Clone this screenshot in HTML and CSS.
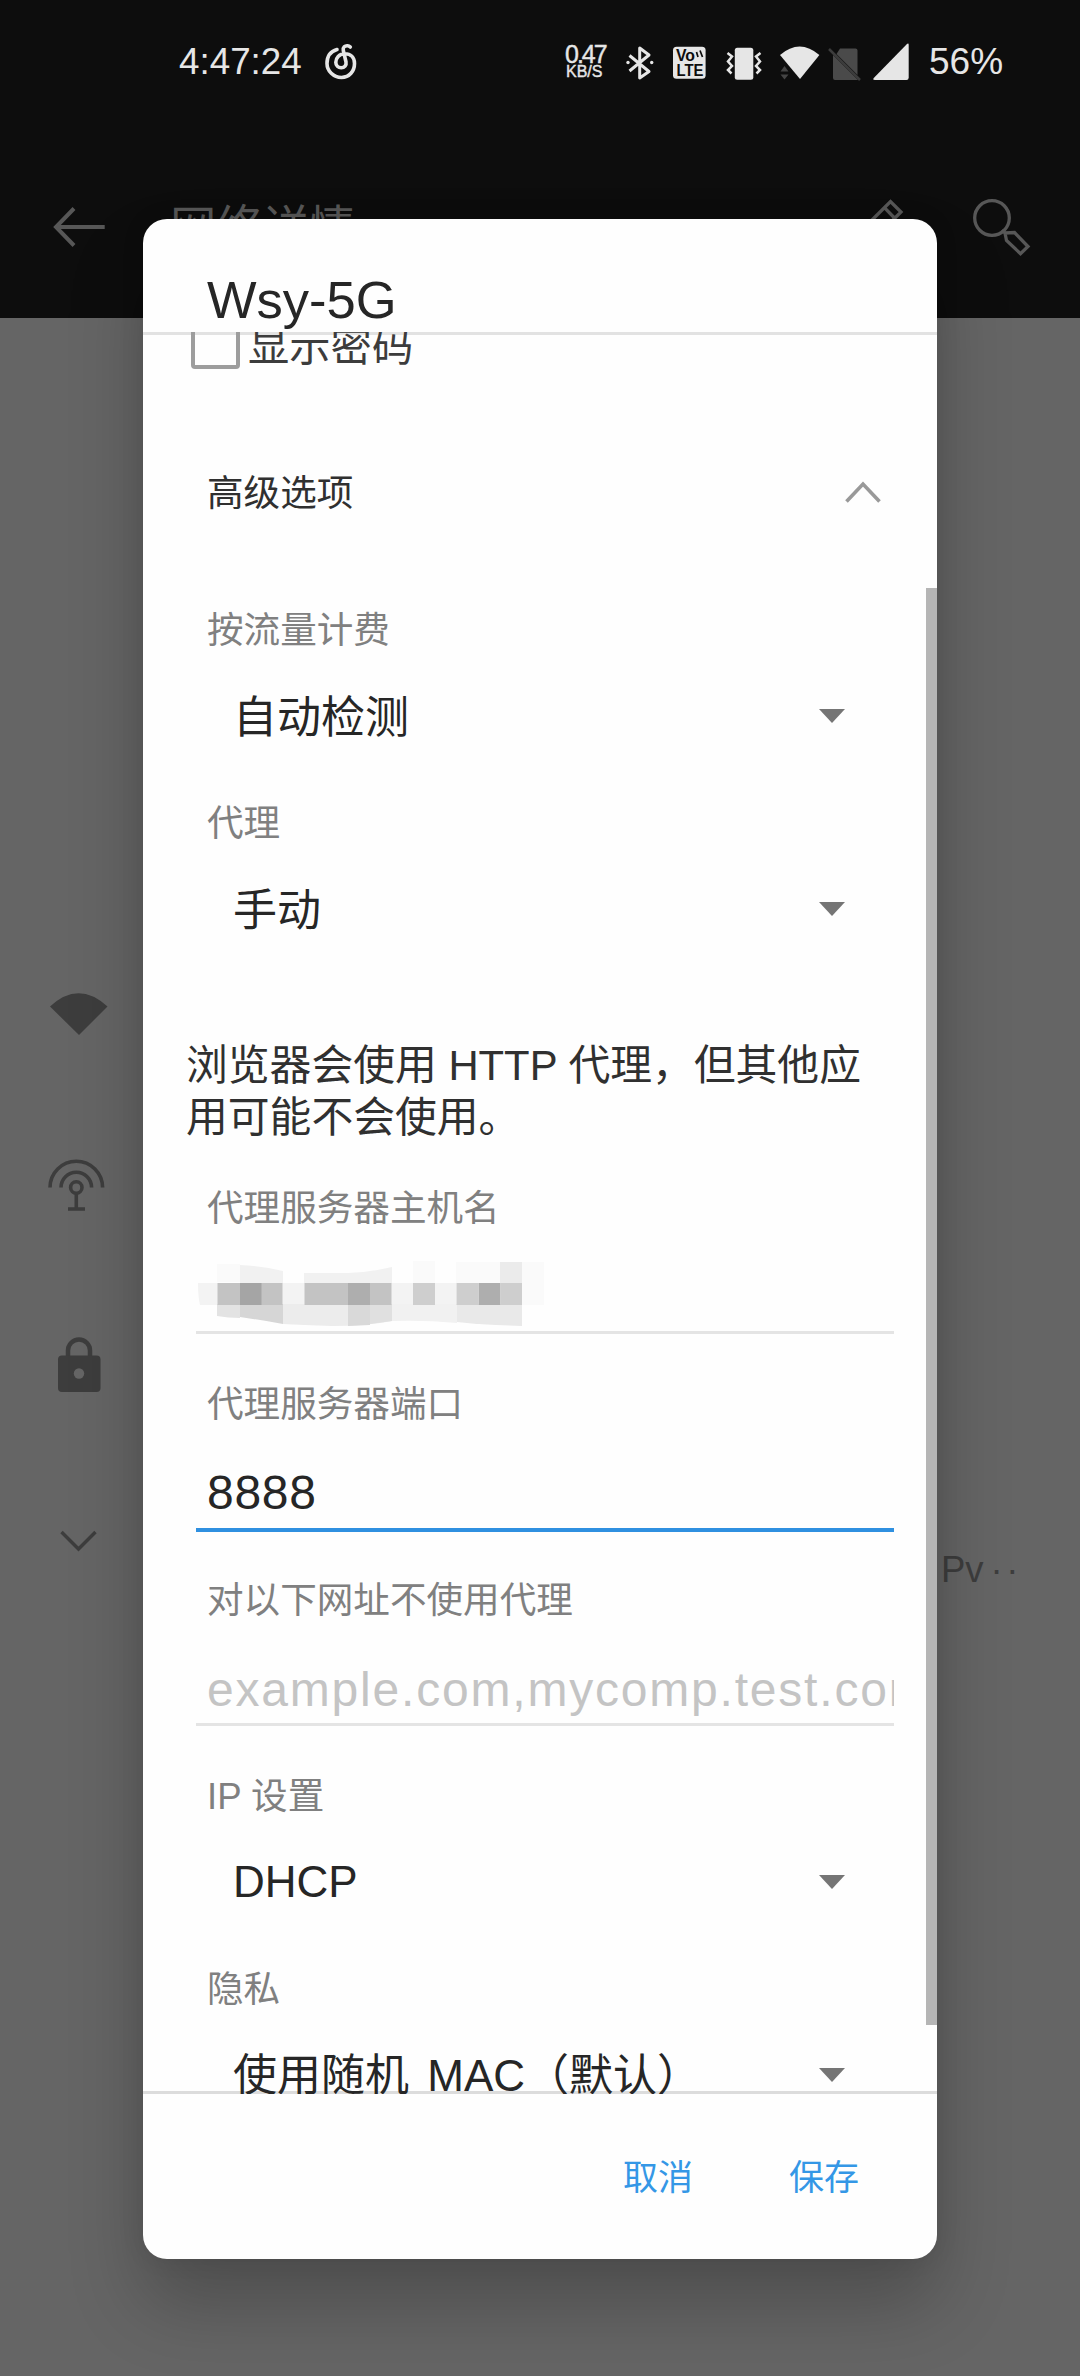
FILE: index.html
```html
<!DOCTYPE html>
<html lang="zh-CN">
<head>
<meta charset="utf-8">
<title>Wsy-5G</title>
<link rel="stylesheet" href="styles.css">
</head>
<body>
<div class="screen">
  <header class="top">
    <div class="status">
      <span class="clock">4:47:24</span>
      <svg class="music" width="36" height="40" viewBox="323 42 36 40" fill="none" stroke="#e6e6e6" stroke-width="3.600" stroke-linecap="round"><path d="M337 49.500C330 51.500 327 57 327 63.500C327 71 333.500 77.500 341.500 77.500S354.500 71 354.500 63.500C354.500 57.500 350.500 53.800 345 53.800C339 53.800 335.800 58 335.800 62.300C335.800 65.500 338.300 67.800 341.200 67.800C344.500 67.800 346.600 65 346 62L343.300 50.500C342.600 47 345 45.500 347.500 45.700C348.800 45.800 349.700 46.400 350.300 47"/></svg>
      <div class="speed"><span class="rate">0.47</span><span class="unit">KB/S</span></div>
      <svg class="sys" width="292" height="44" viewBox="622 38 292 44" fill="#e6e6e6">
        <path d="M629.500 53.500L649 69.500L639.700 76V46L649 53L629.500 69" fill="none" stroke="#e6e6e6" stroke-width="3" stroke-linejoin="round"/>
        <circle cx="628" cy="60.500" r="1.700"/><circle cx="651.700" cy="60.500" r="1.700"/>
        <rect x="673" y="44.800" width="32.600" height="32" rx="3.500"/>
        <g class="volte"><text x="676" y="59" textLength="19" lengthAdjust="spacingAndGlyphs">Vo</text><text x="676.500" y="73.800" textLength="27" lengthAdjust="spacingAndGlyphs">LTE</text></g>
        <path d="M696.500 50l1.500 5M700 48.500l2.500 6.500" stroke="#0d0d0d" stroke-width="1.700"/>
        <rect x="734.800" y="45.800" width="18.500" height="32" rx="2.500"/>
        <path d="M727.500 51l4.500 3.500l-4 5l4 4.500l-4 4l3.500 3.500M760.500 51l-4.500 3.500l4 5l-4 4.500l4 4l-3.500 3.500" fill="none" stroke="#e6e6e6" stroke-width="2.500"/>
        <path d="M780 53Q799.600 36 819.400 53L800 77Z"/>
        <path d="M780.500 69.500l4-5.500l4 5.500zM780.500 72.500l4 5l4-5z" fill="#444"/>
        <path d="M840 46.500h15.500q2 0 2 2v24.500l-21-21zM833 53l25 25h-23q-2 0-2-2z" fill="#4a4a4a"/><path d="M829 47L860 78" stroke="#3c3c3c" stroke-width="2.500"/>
        <path d="M906.500 42.500Q908.700 40.500 908.700 43V75.500Q908.700 78 906.500 78H875Q872 78 874 75.800Z"/>
      </svg>
      <span class="battery">56%</span>
    </div>
    <div class="appbar">
      <svg class="back" width="54" height="44" viewBox="53 205 54 44" fill="none" stroke="#575757" stroke-width="4"><path d="M104.700 227H56M74 208.500L56 227L74 245.500"/></svg>
      <span class="heading">网络详情</span>
      <svg class="tools" width="170" height="64" viewBox="864 194 170 64" fill="none" stroke="#575757" stroke-width="3.300"><path d="M866 225L890.500 200.500L901 211L876 236M884.400 206.700L895 217.500"/><circle cx="992" cy="217" r="17.300" stroke-width="3.300"/><path d="M1002 229L1005 232L1014.500 231.500L1028 245.500L1020.500 252.700L1006.500 239.500L1005 232"/></svg>
    </div>
  </header>
  <main class="rows">
    <svg width="60" height="46" viewBox="49 991 60 46" fill="#3d3d3d"><path d="M50 1006.500Q78.500 980 107.500 1006.500L79 1035Z"/></svg>
    <svg width="60" height="54" viewBox="46 1158 60 54" fill="none" stroke="#3d3d3d" stroke-width="3.600"><path d="M50 1187.500a26.300 26.300 0 0 1 52.600 0M61 1187.500a15.300 15.300 0 0 1 30.600 0M76.300 1194V1209M68 1209h17"/><circle cx="76.300" cy="1187.500" r="5.700"/></svg>
    <svg width="46" height="60" viewBox="56 1334 46 60"><path d="M68 1357V1350.500a11 11 0 0 1 22 0V1357" fill="none" stroke="#3d3d3d" stroke-width="4.500"/><rect x="58" y="1355.500" width="42.500" height="36.500" rx="4" fill="#3d3d3d"/><circle cx="79" cy="1373.500" r="5.200" fill="#656565"/></svg>
    <svg width="40" height="24" viewBox="58 1529 40 24" fill="none" stroke="#3d3d3d" stroke-width="3.400"><path d="M61.500 1532L78.500 1549L95.500 1532"/></svg>
    <span class="summary">Pv<span class="dots">··</span></span>
  </main>

  <section class="dialog">
    <h1 class="title">Wsy-5G</h1>
    <div class="body">
      <div class="check"><span class="box"></span><span class="cn">显示密码</span></div>
      <div class="advanced"><span class="cn">高级选项</span><svg width="40" height="24" viewBox="843 479 40 24" fill="none" stroke="#999" stroke-width="3.600"><path d="M846.500 500.500L863 483L879.500 500.500"/></svg></div>
      <div class="label first">按流量计费</div>
      <div class="spinner"><span class="cn">自动检测</span><i class="caret"></i></div>
      <div class="label">代理</div>
      <div class="spinner"><span class="cn">手动</span><i class="caret"></i></div>
      <p class="info">浏览器会使用 HTTP 代理，但其他应用可能不会使用。</p>
      <div class="label host">代理服务器主机名</div>
      <div class="field">
        <svg width="350" height="68" viewBox="196 1260 350 68">
          <path fill="#f3f3f3" d="M198 1283h340v22H200q-2-8-2-22z"/>
          <path fill="#fafafa" d="M217 1264h23v18h-23zM413 1261h22v22h-22zM456 1262h88v43h-88z"/>
          <path fill="#f1f1f1" d="M240 1265q22 1 43 6v12h-43zM304 1273h44q24-1 44-6v16h-88z"/>
          <path fill="#ebebeb" d="M500 1262h22v21h-22z"/>
          <path fill="#e3e3e3" d="M217 1304h23v14q-12 0-23-2z"/>
          <path fill="#d6d6d6" d="M240 1304h43v20q-22-4-43-7z"/>
          <path fill="#ececec" d="M283 1304h109v17q-24 5-60 5q-30-1-49-2z"/>
          <path fill="#d9d9d9" d="M348 1304h22v21l-22 1z"/><path fill="#e0e0e0" d="M370 1304h22v17l-22 3z"/>
          <path fill="#f1f1f1" d="M392 1304h65v19q-32-3-65-2z"/><path fill="#e9e9e9" d="M457 1304h65v22q-36-1-65-4z"/>
          <path fill="#c3c3c3" d="M217.500 1283h65v22h-65zM304.500 1283h87v22h-87z"/>
          <path fill="#a5a5a5" d="M240 1283h21.500v22H240z"/><path fill="#aeaeae" d="M348 1283h22v22h-22zM478.500 1283h22v22h-22z"/>
          <path fill="#cecece" d="M413 1283h22v22h-22zM456.500 1283h22v22h-22zM500.500 1283h21.500v22h-21.500z"/>
        </svg>
      </div>
      <div class="label next">代理服务器端口</div>
      <div class="field active">8888</div>
      <div class="label next">对以下网址不使用代理</div>
      <div class="field hint">example.com,mycomp.test.com</div>
      <div class="label next">IP 设置</div>
      <div class="spinner"><span class="latin">DHCP</span><i class="caret"></i></div>
      <div class="label">隐私</div>
      <div class="spinner"><span class="mac">使用随机 MAC（默认）</span><i class="caret"></i></div>
      <div class="thumb"></div>
    </div>
    <footer class="actions"><span>取消</span><span>保存</span></footer>
  </section>
</div>
</body>
</html>
```
FILE: styles.css
```css
* { box-sizing: border-box; }
body { margin: 0; font-family: "Liberation Sans", "Noto Sans CJK SC", sans-serif; color: #262626; }
svg { display: block; flex: none; }
.screen { position: relative; width: 1080px; height: 2376px; overflow: hidden; background: #656565; }

.top { height: 318px; background: #0d0d0d; }
.status { display: flex; align-items: center; height: 124px; padding-left: 179px; color: #e6e6e6; }
.clock { width: 144px; font-size: 36.800px; line-height: 40px; }
.speed { display: flex; flex-direction: column; width: 44px; margin-left: 206px; margin-right: 13px; -webkit-text-stroke: .4px #e6e6e6; }
.rate { font-size: 25px; line-height: 20px; letter-spacing: -2px; }
.unit { padding-left: 1px; font-size: 16px; line-height: 16px; }
.volte { font-size: 16.500px; font-weight: 700; fill: #0d0d0d; }
.battery { margin-left: 15px; font-size: 37px; line-height: 40px; }
.appbar { display: flex; align-items: center; height: 206px; padding-left: 53px; }
.heading { width: 694px; margin-left: 63px; padding-top: 2px; font-size: 46.300px; line-height: 60px; color: #575757; }

.rows { display: grid; grid-template-columns: 60px 1fr; justify-items: center; padding-top: 673px; padding-left: 49px; }
.rows svg { grid-column: 1; }
.rows svg:nth-child(2) { margin-top: 121px; margin-left: -6px; }
.rows svg:nth-child(3) { margin-top: 122px; }
.rows svg:nth-child(4) { margin-top: 135px; margin-left: -2px; }
.summary { grid-column: 2; justify-self: start; margin-top: 156px; margin-left: 832px; margin-bottom: -60px; font-size: 36.500px; line-height: 40px; color: #3d3d3d; }
.dots { padding-left: 7px; letter-spacing: 3.500px; }

.dialog {
  position: absolute; left: 143px; top: 219px; width: 794px; height: 2040px;
  overflow: hidden; border-radius: 24px; background: #fefefe;
  box-shadow: 0 44px 74px rgba(0, 0, 0, .24), 0 0 24px rgba(0, 0, 0, .08);
}
.title { height: 113px; margin: 0; padding: 48px 0 0 64px; font-size: 52.500px; font-weight: 400; line-height: 66px; }
.body { position: relative; height: 1762px; overflow: hidden; box-shadow: inset 0 3px #e2e2e2, inset 0 -3px #dcdcdc; }
.check { display: flex; align-items: center; gap: 8px; height: 48px; margin-top: -11px; padding-left: 48px; font-size: 41.300px; line-height: 48px; color: #3c3c3c; }
.box { width: 49px; height: 48px; border: 4px solid #9d9d9d; border-radius: 4px; }
.cn { padding-top: 3px; }
.advanced { display: flex; align-items: center; justify-content: space-between; height: 72px; margin-top: 87px; padding: 0 54px 0 64px; font-size: 36.600px; line-height: 68px; color: #303030; }
.label { height: 60px; margin: 34px 0 0 64px; font-size: 36.600px; line-height: 62px; color: #808080; }
.label.first { margin-top: 72px; }
.label.host { margin-top: 34px; }
.label.next { margin-top: 40px; }
.spinner { display: flex; align-items: center; justify-content: space-between; height: 86px; margin-top: 13px; padding: 0 92px 0 90px; font-size: 44px; line-height: 83px; }
.latin { padding-bottom: 2px; }
.mac { padding-top: 1px; word-spacing: 6px; }
.caret { border: 13px solid transparent; border-top: 14px solid #757575; border-bottom: 0; }
.info { width: 690px; margin: 88px 0 0 43px; font-size: 41.800px; line-height: 52px; color: #303030; }
.field { height: 96px; margin: 0 43px 0 53px; padding-left: 11px; overflow: hidden; border-bottom: 3px solid #e4e4e4; font-size: 48px; line-height: 118px; white-space: nowrap; }
.field svg { margin: 22px 0 0 -11px; }
.field.active { height: 98px; border-bottom: 4px solid #2f90e0; letter-spacing: .700px; }
.active + .label.next { margin-top: 38px; }
.field.hint { color: #c4c4c4; letter-spacing: 1.800px; line-height: 119px; }
.thumb { position: absolute; right: 0; top: 256px; width: 11px; height: 1437px; background: #b5b5b5; }
.actions { display: flex; justify-content: flex-end; gap: 96px; height: 165px; padding-right: 78px; font-size: 35px; line-height: 168px; color: #3497e6; }
```
